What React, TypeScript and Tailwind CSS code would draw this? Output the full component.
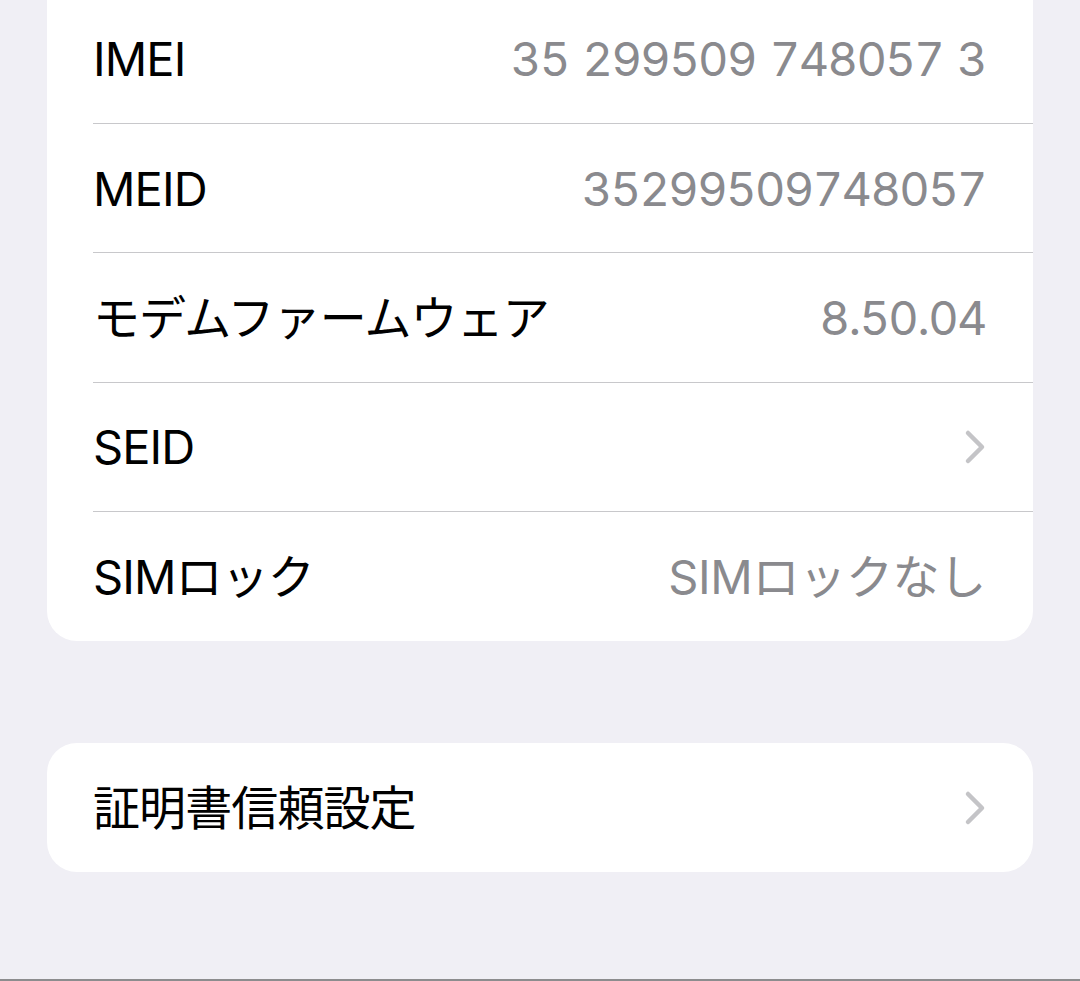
import { ReactNode } from 'react';

const font = { fontFamily: 'Inter, "Noto Sans CJK JP", sans-serif' };

function Chevron() {
  return (
    <svg width="22" height="36" viewBox="0 0 22 36" className="shrink-0">
      <path d="M4 4 L18 18 L4 32" fill="none" stroke="#c4c4c7" strokeWidth="4.5" strokeLinecap="round" strokeLinejoin="round" />
    </svg>
  );
}

interface RowProps {
  label: string;
  value?: ReactNode;
  last?: boolean;
}

function Row({ label, value, last }: RowProps) {
  return (
    <div className="h-[129.3px] pl-[46px] flex">
      <div className={`flex-1 flex items-center justify-between pr-[47px] ${last ? '' : 'border-b border-[#c8c8cb]'}`}>
        <span className="text-[47px] text-black leading-none tracking-[-0.9px]">{label}</span>
        {value}
      </div>
    </div>
  );
}

const Value = ({ children, digits }: { children: ReactNode; digits?: boolean }) => (
  <span
    className={`text-[47px] text-[#8a8a8e] leading-none tabular-nums ${digits ? 'tracking-[-1.6px] [word-spacing:3px]' : 'tracking-[-0.3px]'}`}
  >
    {children}
  </span>
);

export default function App() {
  return (
    <div style={font} className="h-[981px] bg-[#f0eff5] overflow-hidden flex flex-col border-b-2 border-[#8c8c8e]">
      <div className="mx-[47px] -mt-[5.3px] bg-white rounded-b-[30px]">
        <Row label="IMEI" value={<Value digits>35 299509 748057 3</Value>} />
        <Row label="MEID" value={<Value digits>35299509748057</Value>} />
        <Row label="モデムファームウェア" value={<Value digits>8.50.04</Value>} />
        <Row label="SEID" value={<Chevron />} />
        <Row label="SIMロック" value={<Value>SIMロックなし</Value>} last />
      </div>

      <div className="mx-[47px] mt-[102px] bg-white rounded-[30px]">
        <Row label="証明書信頼設定" value={<Chevron />} last />
      </div>
    </div>
  );
}
